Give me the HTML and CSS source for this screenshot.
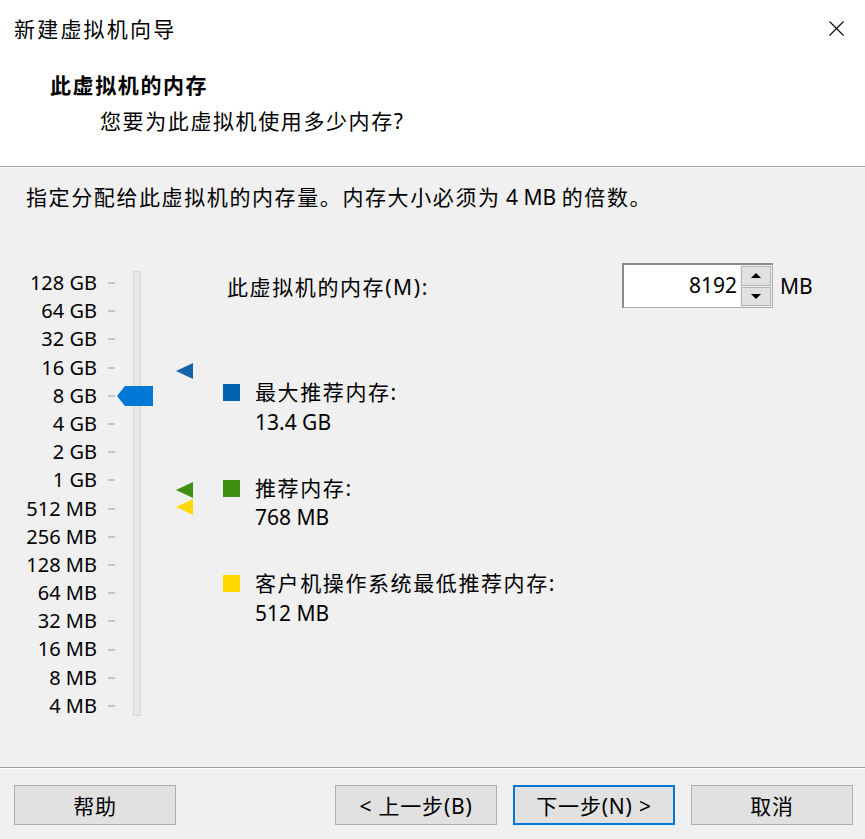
FILE: index.html
```html
<!DOCTYPE html>
<html lang="zh-CN">
<head>
<meta charset="utf-8">
<title>新建虚拟机向导</title>
<link rel="stylesheet" href="styles.css">
</head>
<body>
<div class="dialog">
  <header class="top">
    <div class="titlebar">
      <span class="title">新建虚拟机向导</span>
      <svg class="close" viewBox="0 0 15 15" width="15" height="15"><path d="M0.5 0.5 L14.5 14.5 M14.5 0.5 L0.5 14.5" stroke="#000" stroke-width="1.1" fill="none"/></svg>
    </div>
    <h1 class="heading">此虚拟机的内存</h1>
    <p class="subheading">您要为此虚拟机使用多少内存?</p>
  </header>
  <div class="sep"></div>
  <main class="main">
    <p class="intro">指定分配给此虚拟机的内存量。内存大小必须为<span class="latin"> 4 MB </span>的倍数。</p>
    <div class="content">
      <div class="slider">
        <div class="scale">
          <span class="lbl">128 GB</span><i class="tick"></i>
          <span class="lbl">64 GB</span><i class="tick"></i>
          <span class="lbl">32 GB</span><i class="tick"></i>
          <span class="lbl">16 GB</span><i class="tick"></i>
          <span class="lbl">8 GB</span><i class="tick"></i>
          <span class="lbl">4 GB</span><i class="tick"></i>
          <span class="lbl">2 GB</span><i class="tick"></i>
          <span class="lbl">1 GB</span><i class="tick"></i>
          <span class="lbl">512 MB</span><i class="tick"></i>
          <span class="lbl">256 MB</span><i class="tick"></i>
          <span class="lbl">128 MB</span><i class="tick"></i>
          <span class="lbl">64 MB</span><i class="tick"></i>
          <span class="lbl">32 MB</span><i class="tick"></i>
          <span class="lbl">16 MB</span><i class="tick"></i>
          <span class="lbl">8 MB</span><i class="tick"></i>
          <span class="lbl">4 MB</span><i class="tick"></i>
          <div class="track"></div>
        </div>
        <svg class="thumb" width="36" height="20" viewBox="0 0 36 20"><polygon points="8,0 36,0 36,20 8,20 0,10" fill="#0078d7"/></svg>
        <svg class="marker m-max" width="17" height="16" viewBox="0 0 17 16"><polygon points="0,8 17,0 17,16" fill="#1565aa"/></svg>
        <svg class="marker m-rec" width="17" height="16" viewBox="0 0 17 16"><polygon points="0,8 17,0 17,16" fill="#3f8f10"/></svg>
        <svg class="marker m-min" width="17" height="16" viewBox="0 0 17 16"><polygon points="0,8 17,0 17,16" fill="#ffd800"/></svg>
      </div>
      <div class="right">
        <div class="memrow">
          <span class="memlabel cjk">此虚拟机的内存(M):</span>
          <div class="spin">
            <div class="spin-input">8192</div>
            <div class="spin-btns">
              <div class="sbtn"><i class="arr up"></i></div>
              <div class="sbtn"><i class="arr down"></i></div>
            </div>
          </div>
          <span class="unit">MB</span>
        </div>
        <div class="legend first">
          <i class="sq blue"></i>
          <div class="ltext"><div class="cjk">最大推荐内存:</div><div>13.4 GB</div></div>
        </div>
        <div class="legend">
          <i class="sq green"></i>
          <div class="ltext"><div class="cjk">推荐内存:</div><div>768 MB</div></div>
        </div>
        <div class="legend">
          <i class="sq yellow"></i>
          <div class="ltext"><div class="cjk">客户机操作系统最低推荐内存:</div><div>512 MB</div></div>
        </div>
      </div>
    </div>
  </main>
  <div class="sep"></div>
  <footer class="buttons">
    <button class="btn">帮助</button>
    <div class="group">
      <button class="btn">&lt; 上一步(B)</button>
      <button class="btn default">下一步(N) &gt;</button>
      <button class="btn">取消</button>
    </div>
  </footer>
</div>
</body>
</html>
```

FILE: styles.css
```css
* { box-sizing: border-box; }
html, body { margin: 0; padding: 0; }
body {
  width: 865px;
  height: 839px;
  background: #f0f0f0;
  font-family: "Noto Sans", "Noto Sans CJK SC", sans-serif;
  font-size: 21px;
  color: #000;
  overflow: hidden;
}
.dialog {
  display: flex;
  flex-direction: column;
  height: 839px;
}
.cjk { letter-spacing: 1.6px; }
.latin { letter-spacing: 0; }

.top {
  height: 166px;
  background: #fff;
  flex: none;
}
.titlebar {
  height: 58px;
  display: flex;
  align-items: center;
  justify-content: space-between;
  padding: 0 21px 0 14px;
}
.title { letter-spacing: 2.2px; line-height: 30px; }
.close { display: block; margin-top: -1px; }
.heading {
  margin: 11px 0 0 50px;
  font-size: 21px;
  font-weight: bold;
  line-height: 32px;
  letter-spacing: 1.6px;
}
.subheading {
  margin: 4px 0 0 100px;
  line-height: 32px;
  letter-spacing: 1.6px;
}

.sep {
  flex: none;
  height: 2px;
  border-top: 1px solid #a0a0a0;
  border-bottom: 1px solid #ffffff;
}

.main { flex: 1; }
.intro {
  margin: 14px 0 0 26px;
  line-height: 30px;
  letter-spacing: 1.6px;
}
.content {
  display: flex;
  align-items: flex-start;
  margin-top: 51px;
}

.slider {
  position: relative;
  width: 223px;
  flex: none;
}
.scale {
  display: grid;
  grid-template-columns: 97px 11px 7px 18px 8px;
  grid-template-rows: repeat(16, 28.2px);
  padding-top: 6px;
}
.lbl {
  grid-column: 1;
  text-align: right;
  font-size: 20px;
  line-height: 28.2px;
  white-space: nowrap;
}
.tick {
  grid-column: 3;
  align-self: center;
  height: 2px;
  background: #c6c6c6;
}
.track {
  grid-column: 5;
  grid-row: 1 / -1;
  margin: 2px 0 4px;
  background: #e7e7e7;
  border: 1px solid #d6d6d6;
}
.thumb { position: absolute; left: 117px; top: 123px; }
.marker { position: absolute; left: 176px; }
.m-max { top: 100px; }
.m-rec { top: 219px; }
.m-min { top: 236px; }

.right { flex: 1; }
.memrow {
  display: flex;
  align-items: center;
  height: 45px;
}
.memlabel { width: 399px; padding-left: 4px; }
.spin {
  display: flex;
  width: 151px;
  height: 45px;
  border: 1px solid #acacac;
  border-top: 2px solid #8a8a8a;
  border-left: 2px solid #8a8a8a;
}
.spin-input {
  flex: 1;
  background: #fff;
  text-align: right;
  padding-right: 3px;
  line-height: 40px;
}
.spin-btns {
  width: 32px;
  display: flex;
  flex-direction: column;
  gap: 1px;
  padding: 1px;
  background: #f0f0f0;
}
.sbtn {
  flex: 1;
  background: #e1e1e1;
  border: 1px solid #b5b5b5;
  display: flex;
  align-items: center;
  justify-content: center;
}
.arr { width: 0; height: 0; border-left: 5px solid transparent; border-right: 5px solid transparent; }
.arr.up { border-bottom: 5px solid #000; }
.arr.down { border-top: 5px solid #000; }
.unit { margin-left: 7px; }

.legend {
  display: flex;
  align-items: flex-start;
  gap: 15px;
  margin-top: 36.5px;
}
.legend.first { margin-top: 70px; }
.sq { width: 17px; height: 17px; margin-top: 6px; flex: none; }
.sq.blue { background: #0063b1; }
.sq.green { background: #3f8f10; }
.sq.yellow { background: #ffd800; }
.ltext { line-height: 29.5px; }

.buttons {
  flex: none;
  height: 70px;
  display: flex;
  align-items: flex-start;
  justify-content: space-between;
  padding: 16px 12px 0 14px;
}
.group { display: flex; gap: 16px; }
.btn {
  width: 162px;
  height: 40px;
  background: #e1e1e1;
  border: 1px solid #adadad;
  font-family: "Noto Sans", "Noto Sans CJK SC", sans-serif;
  font-size: 21px;
  color: #000;
  letter-spacing: 0.8px;
  padding: 0;
}
.btn.default { border: 2px solid #0078d7; }
```
